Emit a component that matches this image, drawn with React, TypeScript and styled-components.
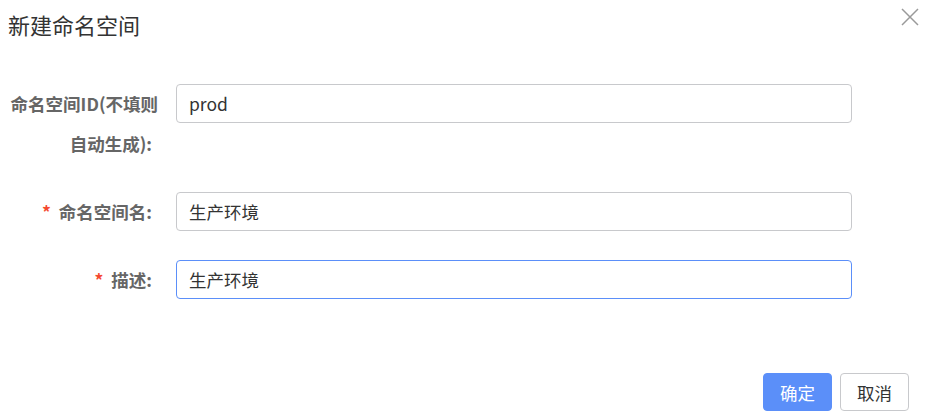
import React from 'react';
import styled, { createGlobalStyle } from 'styled-components';

const GlobalStyle = createGlobalStyle`
  html, body {
    margin: 0;
    padding: 0;
    background: #fff;
    font-family: "Noto Sans CJK SC", "Noto Sans", sans-serif;
  }
`;

const Dialog = styled.div`
  position: relative;
  width: 933px;
  height: 411px;
  overflow: hidden;
  box-sizing: border-box;
`;

const Header = styled.div`
  padding: 9px 8px 0;
  height: 38px;
  box-sizing: border-box;
`;

const Title = styled.span`
  font-size: 22px;
  line-height: 30px;
  color: #333;
`;

const CloseButton = styled.button`
  position: absolute;
  top: 7px;
  right: 13px;
  width: 20px;
  height: 20px;
  padding: 0;
  border: none;
  background: none;
  cursor: pointer;
`;

const Form = styled.div`
  margin-top: 46px;
  display: flex;
  flex-direction: column;
  gap: 28px;
  padding-right: 81px;
`;

const Row = styled.div`
  display: flex;
  align-items: flex-start;
`;

const Label = styled.div`
  width: 152px;
  flex-shrink: 0;
  display: flex;
  flex-direction: column;
  align-items: flex-end;
  font-size: 17.5px;
  font-weight: bold;
  color: #666;
`;

const LabelLine = styled.span<{ $shift?: number }>`
  line-height: 40px;
  white-space: nowrap;
  margin-right: ${(p) => p.$shift ?? 0}px;
`;

const Star = styled.span`
  color: #f5492f;
  margin-right: 8px;
`;

const Input = styled.input<{ $focused?: boolean }>`
  margin-left: 24px;
  flex: 1;
  height: 39px;
  box-sizing: border-box;
  border: 1px solid ${(p) => (p.$focused ? '#5b8ff9' : '#c8c9cc')};
  border-radius: 4px;
  padding: 0 12px;
  font-family: "Noto Sans CJK SC", "Noto Sans", sans-serif;
  font-size: 17.5px;
  color: #333;
  outline: none;
`;

const Footer = styled.div`
  margin-top: 73px;
  display: flex;
  justify-content: flex-end;
  gap: 8px;
  padding-right: 24px;
`;

const Button = styled.button<{ $primary?: boolean }>`
  width: 69px;
  height: 38px;
  border-radius: 4px;
  font-family: "Noto Sans CJK SC", "Noto Sans", sans-serif;
  font-size: 17.5px;
  cursor: pointer;
  border: 1px solid ${(p) => (p.$primary ? '#5b8ff9' : '#c8c9cc')};
  background: ${(p) => (p.$primary ? '#5b8ff9' : '#fff')};
  color: ${(p) => (p.$primary ? '#fff' : '#333')};
`;

export default function App() {
  return (
    <>
      <GlobalStyle />
      <Dialog>
        <Header>
          <Title>新建命名空间</Title>
        </Header>
        <CloseButton aria-label="关闭">
          <svg width="20" height="20" viewBox="0 0 20 20">
            <path d="M2 2 L18 18 M18 2 L2 18" stroke="#9a9a9a" strokeWidth="1.5" fill="none" />
          </svg>
        </CloseButton>
        <Form>
          <Row>
            <Label>
              <LabelLine $shift={-6}>命名空间ID(不填则</LabelLine>
              <LabelLine>自动生成):</LabelLine>
            </Label>
            <Input defaultValue="prod" />
          </Row>
          <Row>
            <Label>
              <LabelLine>
                <Star>*</Star>命名空间名:
              </LabelLine>
            </Label>
            <Input defaultValue="生产环境" />
          </Row>
          <Row>
            <Label>
              <LabelLine>
                <Star>*</Star>描述:
              </LabelLine>
            </Label>
            <Input $focused defaultValue="生产环境" />
          </Row>
        </Form>
        <Footer>
          <Button $primary>确定</Button>
          <Button>取消</Button>
        </Footer>
      </Dialog>
    </>
  );
}
